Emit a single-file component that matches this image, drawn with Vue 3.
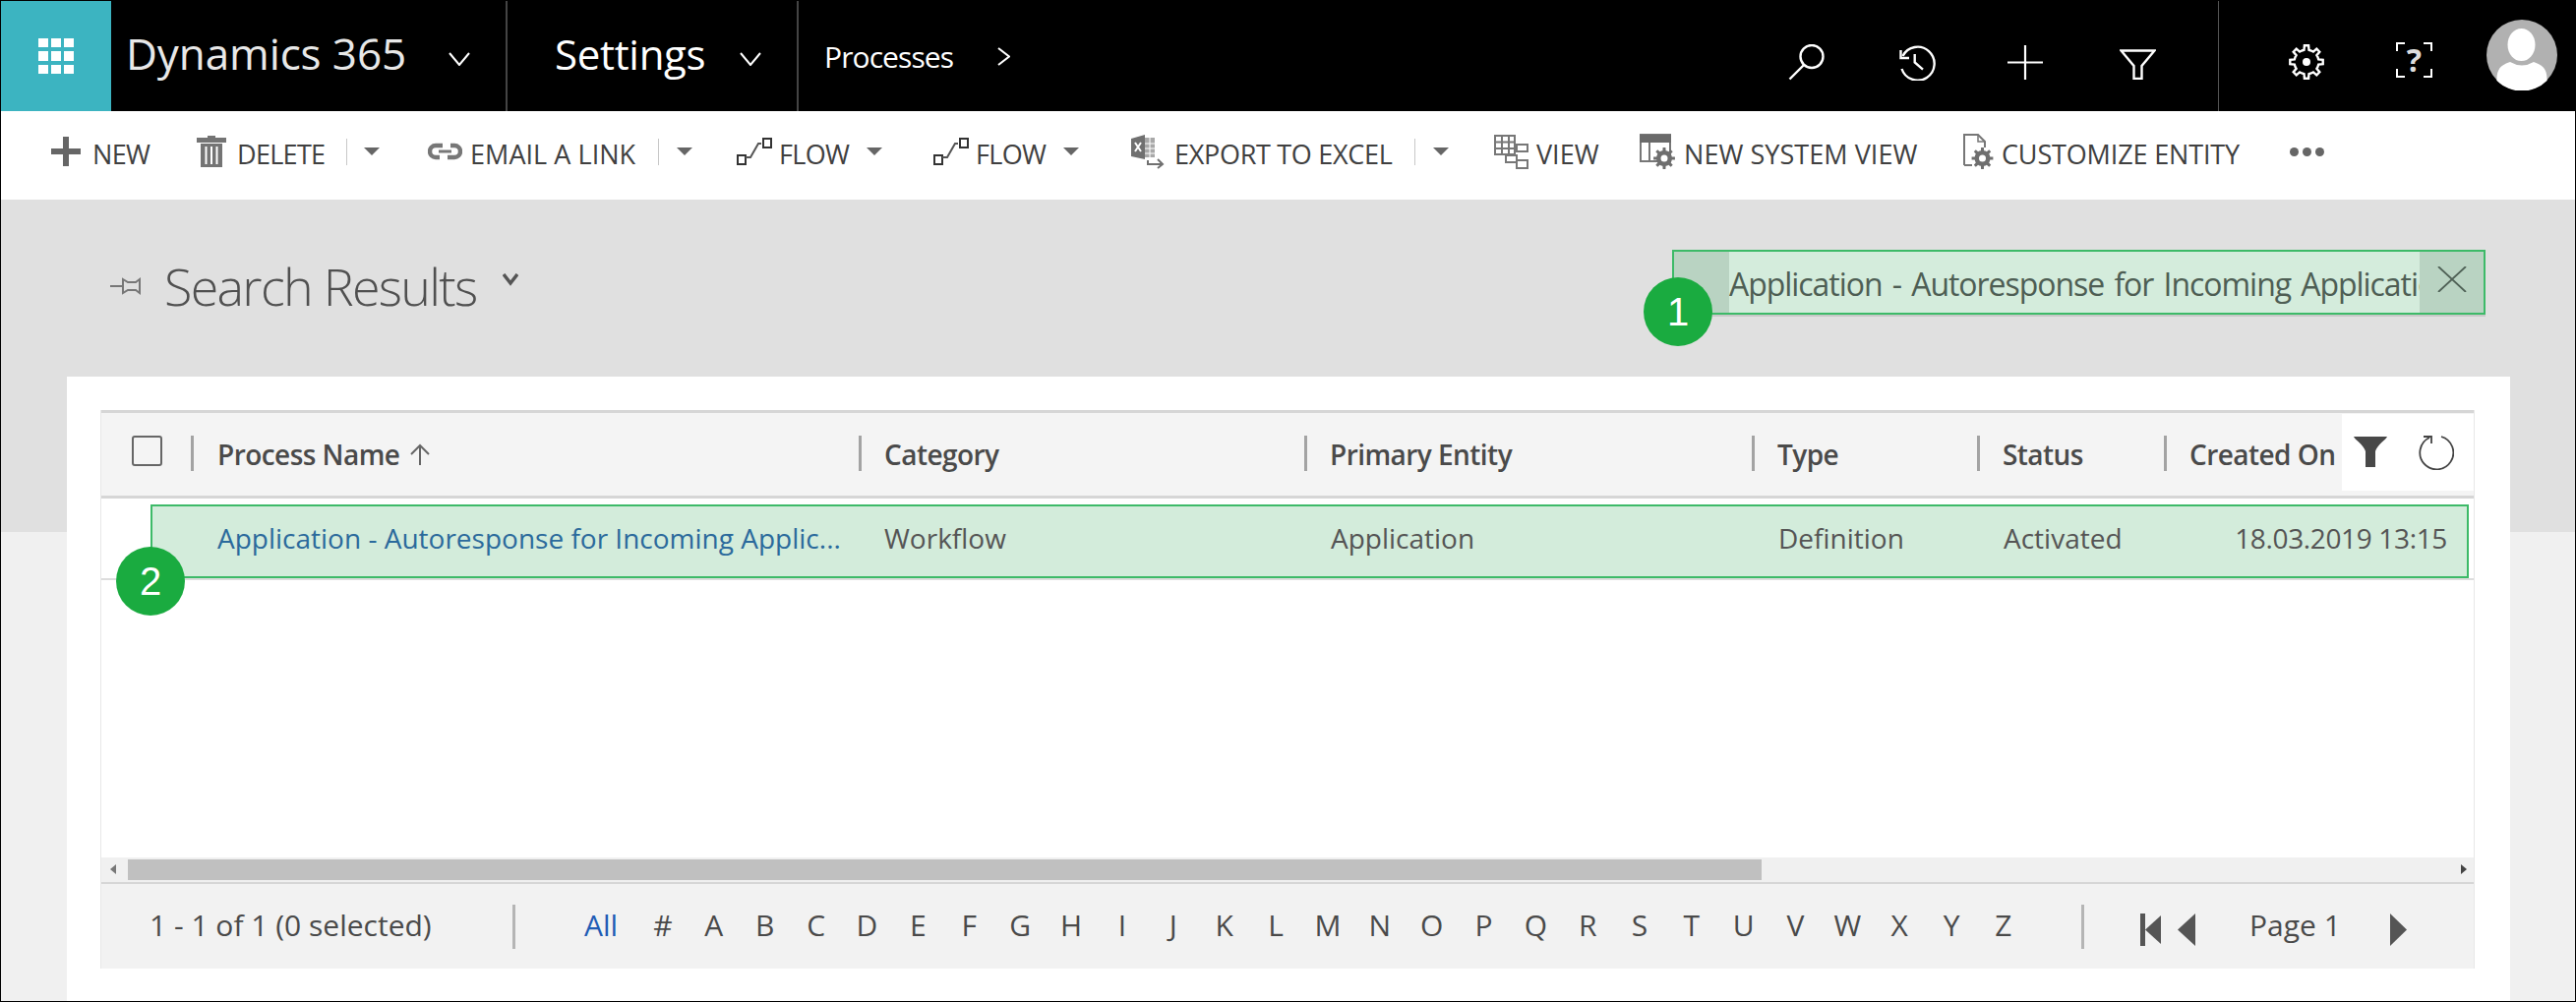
<script setup>
const gearPath = (cx, cy, ro, ri, n) => {
  let d = ''
  const step = (Math.PI * 2) / n
  for (let i = 0; i < n; i++) {
    const a = i * step - Math.PI / 2
    const pts = [[ri, a - step * 0.5], [ri, a - step * 0.26], [ro, a - step * 0.16], [ro, a + step * 0.16], [ri, a + step * 0.26]]
    for (const [r, t] of pts) {
      d += (d ? 'L' : 'M') + (cx + r * Math.cos(t)).toFixed(1) + ' ' + (cy + r * Math.sin(t)).toFixed(1)
    }
  }
  return d + 'Z'
}
const letters = '#ABCDEFGHIJKLMNOPQRSTUVWXYZ'.split('')
</script>

<template>
  <div class="page">
    <header class="topbar">
      <div class="tile">
        <svg width="36" height="36" viewBox="0 0 36 36" fill="#fff">
          <rect x="0" y="0" width="10" height="9" /><rect x="13" y="0" width="10" height="9" /><rect x="26" y="0" width="10" height="9" />
          <rect x="0" y="13" width="10" height="10" /><rect x="13" y="13" width="10" height="10" /><rect x="26" y="13" width="10" height="10" />
          <rect x="0" y="27" width="10" height="9" /><rect x="13" y="27" width="10" height="9" /><rect x="26" y="27" width="10" height="9" />
        </svg>
      </div>
      <div class="nav nav-app">
        <span class="app-name">Dynamics 365</span>
        <svg class="chev" width="22" height="14" viewBox="0 0 22 14" fill="none" stroke="#fff" stroke-width="2"><path d="M1 1l10 12L21 1" /></svg>
      </div>
      <div class="nav nav-settings">
        <span class="area">Settings</span>
        <svg class="chev" width="22" height="14" viewBox="0 0 22 14" fill="none" stroke="#fff" stroke-width="2"><path d="M1 1l10 12L21 1" /></svg>
      </div>
      <div class="nav nav-proc">
        <span class="proc">Processes</span>
        <svg width="13" height="19" viewBox="0 0 13 19" fill="none" stroke="#fff" stroke-width="2"><path d="M1 1l11 8.500L1 18" /></svg>
      </div>
      <div class="top-icons">
        <svg width="38" height="37" viewBox="0 0 38 37" fill="none" stroke="#fff" stroke-width="2.400"><circle cx="24" cy="12.500" r="11.500" /><path d="M16 21L1.500 35.500" /></svg>
        <svg width="39" height="37" viewBox="0 0 39 37" fill="none" stroke="#fff" stroke-width="2.400"><path d="M4.500 12A17 17 0 1 1 3.500 25" /><path d="M2.500 6v8h8.500" /><path d="M16.700 10v8.500l8.300 7.200" /></svg>
        <svg width="36" height="35" viewBox="0 0 36 35" fill="none" stroke="#fff" stroke-width="2.200"><path d="M18 0v35M0 17.500h36" /></svg>
        <svg class="ic-funnel" width="37" height="31" viewBox="0 0 37 31" fill="none" stroke="#fff" stroke-width="2.400"><path d="M1.500 1.500h34L22.500 17v13h-8V17z" /></svg>
        <i class="top-sep"></i>
        <svg width="36" height="36" viewBox="0 0 36 36" fill="none" stroke="#fff" stroke-width="2.400"><path :d="gearPath(18, 18, 16.800, 12.500, 8)" /><circle cx="18" cy="18" r="4" fill="#fff" stroke="none" /></svg>
        <div class="help">
          <svg width="37" height="36" viewBox="0 0 37 36" fill="none" stroke="#fff" stroke-width="2"><path d="M9 1H1v8M28 1h8v8M9 35H1v-8M28 35h8v-8" /></svg>
          <span class="help-q">?</span>
        </div>
        <div class="avatar">
          <svg width="72" height="72" viewBox="0 0 72 72"><circle cx="36" cy="36" r="36" fill="#b1b1b1" /><ellipse cx="35.500" cy="25.500" rx="14" ry="16.500" fill="#fff" /><path d="M10.500 62C10 50 15 46 24 43Q36 50 48 43C57 46 62 50 61.500 62A36 36 0 0 1 10.500 62z" fill="#fff" /></svg>
        </div>
      </div>
    </header>

    <nav class="toolbar">
      <div class="tb"><svg width="30" height="30" viewBox="0 0 30 30" fill="#666"><path d="M12 0h6v12h12v6H18v12h-6V18H0v-6h12z" /></svg><span class="gap-13 s-new">NEW</span></div>
      <div class="tb"><svg width="30" height="32" viewBox="0 0 30 32" fill="#747474"><path d="M11 0h8v2h11v5H0V2h11zM4 8h22v24H4zM8.500 11v18h2V11zm5.500 0v18h2V11zm5.500 0v18h2V11z" fill-rule="evenodd" /></svg><span class="gap-12 s-new">DELETE</span></div>
      <i class="tb-sep"></i>
      <div class="caret"></div>
      <div class="tb"><svg width="35" height="18" viewBox="0 0 35 18" fill="none" stroke="#777" stroke-width="4.500"><path d="M15 3H8a6 6 0 0 0 0 12h4" /><path d="M20 15h7a6 6 0 0 0 0-12h-4" /><path d="M11 9h13" stroke-width="3" /></svg><span class="gap-10 s-email">EMAIL A LINK</span></div>
      <i class="tb-sep"></i>
      <div class="caret"></div>
      <div class="tb"><svg width="36" height="28" viewBox="0 0 36 28" fill="none" stroke="#333" stroke-width="2"><rect x="1" y="18" width="8" height="9" /><path d="M9 20h5L22 6h3" stroke="#555" /><rect x="27" y="1" width="8" height="9" /></svg><span class="gap-8 s-new">FLOW</span></div>
      <div class="caret"></div>
      <div class="tb"><svg width="36" height="28" viewBox="0 0 36 28" fill="none" stroke="#333" stroke-width="2"><rect x="1" y="18" width="8" height="9" /><path d="M9 20h5L22 6h3" stroke="#555" /><rect x="27" y="1" width="8" height="9" /></svg><span class="gap-8 s-new">FLOW</span></div>
      <div class="caret"></div>
      <div class="tb"><svg width="35" height="36" viewBox="0 0 35 36"><path d="M0 5L14 1v25L0 23z" fill="#707070" /><path d="M14 4h10v20H14z" fill="#a8a8a8" /><path d="M14 10h10M14 15h10M14 20h10M19 4v20" stroke="#fff" stroke-width="1" /><path d="M4 9l6 9M10 9l-6 9" stroke="#fff" stroke-width="2" /><path d="M17 27v4h15m-5-5l5 5-5 4" fill="none" stroke="#707070" stroke-width="2" /></svg><span class="gap-9 s-export">EXPORT TO EXCEL</span></div>
      <i class="tb-sep"></i>
      <div class="caret"></div>
      <div class="tb"><svg width="36" height="36" viewBox="0 0 36 36" fill="#fff" stroke="#777" stroke-width="2"><path d="M1 2h20v19H1zM8 2v19M15 2v19M1 8.500h20M1 15h20" /><rect x="23" y="11" width="11" height="7" /><rect x="12" y="22" width="11" height="7" /><rect x="23" y="27" width="11" height="8" /></svg><span class="gap-7 s-view">VIEW</span></div>
      <div class="tb"><svg width="36" height="36" viewBox="0 0 36 36"><rect x="1" y="1" width="30" height="27" fill="#fff" stroke="#777" stroke-width="2" /><rect x="0" y="1" width="32" height="8" fill="#6a6a6a" /><path d="M10 9v19" stroke="#777" stroke-width="2" /><path :d="gearPath(25, 25, 11, 8, 8)" fill="#6e6e6e" /><circle cx="25" cy="25" r="3.500" fill="#fff" /></svg><span class="gap-9 s-email">NEW SYSTEM VIEW</span></div>
      <div class="tb"><svg width="32" height="36" viewBox="0 0 32 36"><path d="M1 32V1h14l7 7v6M1 32h8" fill="none" stroke="#777" stroke-width="2" /><path d="M15 1v7h7" fill="none" stroke="#777" stroke-width="1.500" /><path :d="gearPath(19.500, 25, 11, 8, 8)" fill="#6e6e6e" /><circle cx="19.500" cy="25" r="3.500" fill="#fff" /></svg><span class="gap-7 s-ce">CUSTOMIZE ENTITY</span></div>
      <div class="dots"><i></i><i></i><i></i></div>
    </nav>

    <main class="main">
      <section class="head">
        <div class="title">
          <svg width="32" height="18" viewBox="0 0 32 18" fill="none" stroke="#777" stroke-width="2"><path d="M0 9h13" /><path d="M13 2l5 3h8l4-3v14l-4-3h-8l-5 3z" /></svg>
          <h1>Search Results</h1>
          <svg class="title-chev" width="16" height="13" viewBox="0 0 16 13" fill="none" stroke="#555" stroke-width="3.500"><path d="M1 1l7 9 7-9" /></svg>
        </div>
        <div class="quick">
          <div class="quick-l"></div>
          <div class="quick-text">Application - Autoresponse for Incoming Application</div>
          <div class="quick-x"><svg width="30" height="26" viewBox="0 0 30 26" fill="none" stroke="#4f6156" stroke-width="1.800"><path d="M1 0l28 26M29 0L1 26" /></svg></div>
          <span class="badge badge-1">1</span>
        </div>
      </section>

      <section class="card">
        <div class="grid">
          <div class="thead">
            <div class="th th-check"><span class="check"></span></div>
            <div class="th"><i class="th-sep first"></i><span>Process Name</span><svg class="sort" width="20" height="22" viewBox="0 0 20 22" fill="none" stroke="#666" stroke-width="2"><path d="M10 22V2M1 11l9-9 9 9" /></svg></div>
            <div class="th"><i class="th-sep"></i><span>Category</span></div>
            <div class="th"><i class="th-sep"></i><span>Primary Entity</span></div>
            <div class="th"><i class="th-sep"></i><span>Type</span></div>
            <div class="th"><i class="th-sep"></i><span>Status</span></div>
            <div class="th"><i class="th-sep"></i><span>Created On</span></div>
            <div class="th-tools">
              <svg width="34" height="32" viewBox="0 0 34 32" fill="#484848"><path d="M0 0h34C33 3 24 8 22 15v16H12V15C10 8 1 3 0 0z" /></svg>
              <svg width="36" height="36" viewBox="0 0 36 36" fill="none" stroke="#444" stroke-width="1.800"><path d="M23 2A17 17 0 1 1 11 3" /><path d="M5 2h8v7" /></svg>
            </div>
          </div>
          <div class="body">
            <div class="row">
              <a class="cell link">Application - Autoresponse for Incoming Applic...</a>
              <span class="cell">Workflow</span>
              <span class="cell">Application</span>
              <span class="cell">Definition</span>
              <span class="cell">Activated</span>
              <span class="cell date">18.03.2019 13:15</span>
              <span class="badge badge-2">2</span>
            </div>
            <div class="row-line"></div>
          </div>
          <div class="hscroll">
            <i class="arrow-l"></i>
            <div class="thumb"></div>
            <i class="arrow-r"></i>
          </div>
          <footer class="foot">
            <span class="count">1 - 1 of 1 (0 selected)</span>
            <i class="foot-sep"></i>
            <span class="all">All</span>
            <div class="letters"><span v-for="l in letters" :key="l">{{ l }}</span></div>
            <i class="foot-sep sep2"></i>
            <div class="pager">
              <svg width="22" height="33" viewBox="0 0 22 33" fill="#555"><rect x="0" y="0" width="5" height="33" /><path d="M5 16.500L21 2v29z" /></svg>
              <svg class="prev" width="18" height="33" viewBox="0 0 18 33" fill="#555"><path d="M0 16.500L18 0v33z" /></svg>
              <span class="page-no">Page 1</span>
              <svg class="next" width="17" height="33" viewBox="0 0 17 33" fill="#555"><path d="M17 16.500L0 0v33z" /></svg>
            </div>
          </footer>
        </div>
      </section>
    </main>
  </div>
</template>

<style>
html, body { margin: 0; padding: 0; background: #fff; }
</style>

<style scoped>
* { box-sizing: border-box; }
.page {
  width: 2619px; height: 1019px; border: 1px solid #000; overflow: hidden;
  display: flex; flex-direction: column; background: #fff;
  font-family: "Open Sans", "Noto Sans", sans-serif; color: #484848;
}
.topbar { height: 112px; flex: none; background: #000; display: flex; color: #fff; }
.tile { width: 112px; background: #3cb4c1; display: flex; align-items: center; justify-content: center; }
.nav { height: 100%; display: flex; align-items: center; border-right: 2px solid #444; flex: none; }
.nav-app { width: 403px; padding-left: 15px; }
.app-name { font-size: 44px; width: 328px; letter-spacing: -.1px; color: #e8e8e8; white-space: nowrap; padding-bottom: 6px; }
.nav-settings { width: 296px; padding-left: 48px; }
.area { font-size: 42px; width: 188px; letter-spacing: -.3px; white-space: nowrap; padding-bottom: 6px; }
.nav-proc { border-right: none; width: 220px; padding-left: 26px; }
.proc { font-size: 30px; width: 176px; letter-spacing: -.9px; white-space: nowrap; }
.chev { margin-top: 6px; }
.top-icons { flex: 1; display: grid; align-items: center; grid-template-columns: 112px 111px 114px 100px 72px 109px 92px 1fr; margin-left: 786px; }
.top-icons > svg { margin-top: 12px; }
.top-icons > .ic-funnel { margin-top: 16px; }
.top-sep { width: 1px; height: 112px; background: #555; }
.help { position: relative; width: 37px; height: 36px; margin-top: 8px; }
.help-q { position: absolute; left: 0; right: 0; top: -2px; text-align: center; font-size: 32px; font-weight: 700; color: #ddd; line-height: 40px; }
.avatar { width: 72px; height: 72px; line-height: 0; margin-top: -2px; }

.toolbar {
  height: 90px; flex: none; background: #fff; display: grid; align-items: center;
  grid-template-columns: 148px 152px 18px 65px 234px 19px 61px 132px 68px 132px 69px 288px 19px 62px 148px 329px 332px 1fr;
  padding: 0 0 8px 51px; font-size: 27px; color: #404040;
}
.tb { display: flex; align-items: center; white-space: nowrap; }
.tb svg { flex: none; }
.tb span { padding-top: 5px; }
.s-new { letter-spacing: -.7px; }
.s-email { letter-spacing: .05px; }
.s-export { letter-spacing: -.3px; }
.s-view { letter-spacing: 0; }
.s-ce { letter-spacing: -.15px; }
.gap-13 { margin-left: 12px; } .gap-12 { margin-left: 11px; } .gap-10 { margin-left: 8px; }
.gap-9 { margin-left: 9px; } .gap-8 { margin-left: 7px; } .gap-7 { margin-left: 7px; }
.tb-sep { width: 1px; height: 27px; background: #c8c8c8; }
.caret { width: 0; height: 0; border-left: 8px solid transparent; border-right: 8px solid transparent; border-top: 8px solid #666; }
.dots { display: flex; gap: 4px; }
.dots i { width: 9px; height: 9px; border-radius: 50%; background: #666; }

.main { flex: 1; background: linear-gradient(#e0e0e0 338px, #f0f0f0 338px); min-height: 0; }
.head { height: 180px; display: flex; justify-content: space-between; align-items: flex-start; padding: 0 91px 0 111px; }
.title { display: flex; align-items: center; margin-top: 52px; }
.title h1 { margin: 0 0 0 23px; font-size: 52px; font-weight: 300; color: #505050; letter-spacing: -1.7px; line-height: 72px; white-space: nowrap; }
.title-chev { margin: -14px 0 0 26px; }
.quick {
  position: relative; margin-top: 51px; width: 827px; height: 66px; display: flex;
  background: #d4ecdc; border: 2px solid #3dba68; box-shadow: 0 2px 0 #c8c8c8; font-size: 32px; color: #4e5e54;
}
.quick-l { width: 56px; flex: none; background: #b9d3c2; }
.quick-text { flex: 1; overflow: hidden; white-space: nowrap; line-height: 65px; letter-spacing: -1.05px; word-spacing: 3px; }
.quick-x { width: 65px; flex: none; background: #b9d3c2; display: flex; align-items: center; justify-content: center; padding-bottom: 6px; }
.badge {
  position: absolute; width: 70px; height: 70px; border-radius: 50%; background: #1aab40; color: #fff;
  display: flex; align-items: center; justify-content: center; font-family: "Liberation Sans", sans-serif; font-size: 40px; line-height: 1;
}
.badge-1 { left: -31px; top: 26px; }
.badge-2 { left: -37px; top: 41px; }

.card { margin-left: 67px; width: 2484px; height: 635px; background: #fff; padding: 34px 36px 0 34px; }
.grid { height: 568px; display: flex; flex-direction: column; border-left: 1px solid #e8e8e8; border-right: 1px solid #e8e8e8; font-size: 28px; }
.thead {
  height: 90px; flex: none; display: grid; background: #f4f4f4; border-top: 3px solid #d6d6d6; border-bottom: 3px solid #d6d6d6;
  grid-template-columns: 91px 679px 453px 455px 229px 190px 181px 1fr; font-weight: 600; letter-spacing: -.55px; color: #4a4a4a;
}
.th { display: flex; align-items: center; white-space: nowrap; }
.th-sep { width: 3px; height: 36px; background: #a3a3a3; margin-right: 23px; flex: none; margin-top: -2px; }
.th-sep.first { margin-right: 24px; }
.th-check { padding-left: 31px; }
.check { width: 31px; height: 31px; border: 2px solid #666; border-radius: 3px; background: #f4f4f4; margin-top: -8px; }
.sort { margin-left: 11px; }
.th-tools { background: #fff; margin-top: 1px; margin-bottom: 5px; display: flex; align-items: center; padding-left: 12px; gap: 32px; }
.body { flex: 1; position: relative; padding-top: 6px; }
.row {
  position: relative; margin: 0 5px 0 50px; height: 75px; background: #d3ecdb; border: 2px solid #3dba68;
  display: grid; align-items: center; grid-template-columns: 678px 454px 455px 229px 190px 1fr; padding: 0 20px 8px 66px; color: #555; white-space: nowrap;
}
.link { color: #2b6a9c; }
.date { text-align: right; letter-spacing: -.35px; }
.row-line { height: 2px; background: #ddd; }
.hscroll { height: 25px; flex: none; background: #f0f0f0; display: flex; align-items: center; position: relative; }
.thumb { position: absolute; left: 27px; top: 2px; width: 1661px; height: 21px; background: #c0c0c0; }
.arrow-l { position: absolute; left: 9px; top: 7px; width: 0; height: 0; border: 5px solid transparent; border-left: 0; border-right: 6px solid #777; }
.arrow-r { position: absolute; right: 7px; top: 7px; width: 0; height: 0; border: 5px solid transparent; border-right: 0; border-left: 6px solid #444; }
.foot {
  height: 88px; flex: none; background: #f2f2f2; border-top: 2px solid #d6d6d6; display: flex; align-items: center;
  padding: 0 0 3px 49px; color: #4a4a4a; white-space: nowrap; position: relative; font-size: 30px;
}
.count { width: 369px; }
.foot-sep { width: 3px; height: 45px; background: #b5b5b5; flex: none; margin-top: 3px; }
.all { margin-left: 70px; width: 54px; color: #1f5cb5; }
.letters { display: grid; grid-template-columns: repeat(12, 51.900px) repeat(15, 52.850px); text-align: center; width: 1417px; flex: none; }
.sep2 { margin-left: 51px; }
.pager { display: flex; align-items: center; margin-left: 57px; }
.pager svg { margin-top: 10px; flex: none; }
.prev { margin-left: 16px; }
.page-no { margin-left: 55px; width: 143px; }
</style>
